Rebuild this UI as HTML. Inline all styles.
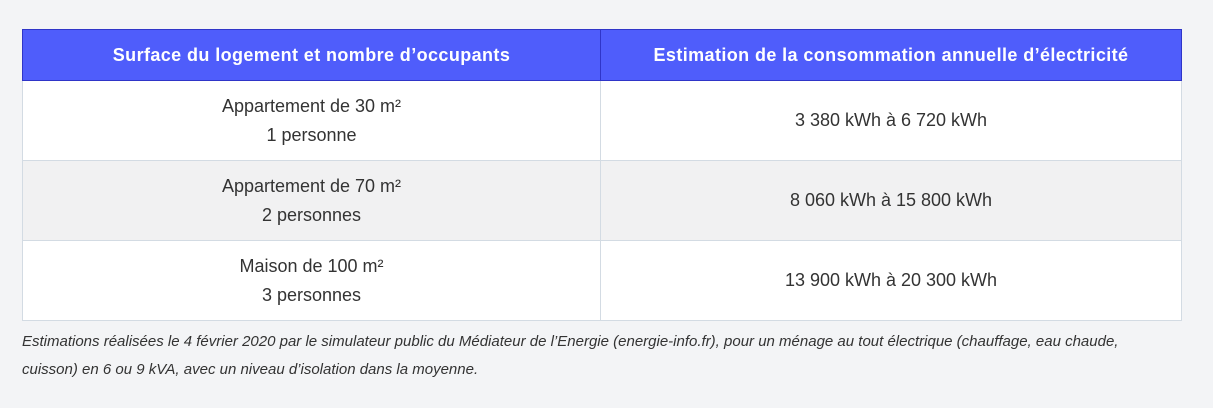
<!DOCTYPE html>
<html><head><meta charset="utf-8"><style>
body{margin:0;background:#f3f4f6;font-family:"Liberation Sans",sans-serif;width:1213px;height:408px;overflow:hidden}
table{position:absolute;left:22px;top:29px;width:1160px;border-collapse:collapse;table-layout:fixed}
th{background:#4f5dfb;color:#fff;font-size:18px;letter-spacing:0.4px;font-weight:bold;height:50px;border:1px solid #2f35c8;padding:0}
td{border:1px solid #d3dbe3;height:79px;text-align:center;font-size:18px;color:#333;line-height:29px;padding:0}
tr.g td{background:#f1f1f2}
tr.w td{background:#fff}
p{position:absolute;left:22px;top:328px;margin:0;font-style:italic;font-size:15px;line-height:28px;color:#333;width:1180px;white-space:nowrap}
</style></head><body>
<table><colgroup><col style="width:578px"><col></colgroup>
<tr><th>Surface du logement et nombre d’occupants</th><th>Estimation de la consommation annuelle d’électricité</th></tr>
<tr class="w"><td>Appartement de 30 m²<br>1 personne</td><td>3 380 kWh à 6 720 kWh</td></tr>
<tr class="g"><td>Appartement de 70 m²<br>2 personnes</td><td>8 060 kWh à 15 800 kWh</td></tr>
<tr class="w"><td>Maison de 100 m²<br>3 personnes</td><td>13 900 kWh à 20 300 kWh</td></tr>
</table>
<p>Estimations réalisées le 4 février 2020 par le simulateur public du Médiateur de l’Energie (energie-info.fr), pour un ménage au tout électrique (chauffage, eau chaude,<br>cuisson) en 6 ou 9 kVA, avec un niveau d’isolation dans la moyenne.</p>
</body></html>
